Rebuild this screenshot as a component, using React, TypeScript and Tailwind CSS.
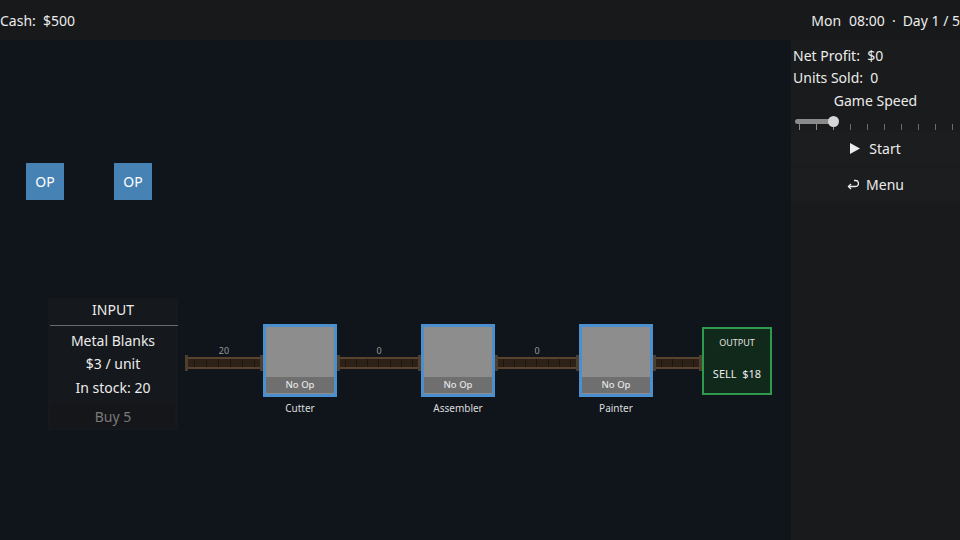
import { useState } from 'react'

const font = { fontFamily: '"Noto Sans", "Open Sans", sans-serif' }

function Conveyor({ width, count }: { width: number; count?: number }) {
  const ticks = Math.floor(width / 12)
  return (
    <div className="mt-[49px] flex flex-col items-center" style={{ width }}>
      <span className="h-[8px] text-[9px] leading-[8px] text-[#9a9a9a]">{count}</span>
      <div className="flex h-[16px] w-full items-center">
        <div className="h-[16px] w-[3px] bg-[#4d3e2e]" />
        <div className="flex h-[12px] flex-1 items-stretch justify-around border-y-2 border-[#57432f] bg-[#2e2117]">
          {Array.from({ length: ticks }).map((_, i) => (
            <div key={i} className="w-px bg-[#1c140d]" />
          ))}
        </div>
        <div className="h-[16px] w-[3px] bg-[#4d3e2e]" />
      </div>
    </div>
  )
}

function Machine({ name }: { name: string }) {
  return (
    <div className="mt-[26px] flex w-[74px] flex-col items-center">
      <div className="flex h-[73px] w-[74px] flex-col border-[3px] border-[#4b8fcf] bg-[#8d8d8d]">
        <div className="flex-1" />
        <div className="mb-[1px] flex h-[16px] items-center justify-center bg-[#6f6f6f] text-[9.5px] font-medium text-[#e4e4e4]">
          No Op
        </div>
      </div>
      <span className="mt-[4px] text-[10px] leading-[14px] text-[#dcdcdc]">{name}</span>
    </div>
  )
}

export default function App() {
  const [speed] = useState(2)

  return (
    <div className="flex h-[540px] w-[960px] flex-col overflow-hidden bg-[#10151c] text-[#ececec]" style={font}>
      <header className="flex h-10 shrink-0 items-center justify-between bg-[#18191b] text-[14px]">
        <span className="whitespace-pre">Cash:  $500</span>
        <div className="flex items-center whitespace-pre">
          <span>Mon</span>
          <span className="ml-[8px]">08:00</span>
          <span className="ml-[7px]">·</span>
          <span className="ml-[7px]">Day 1 / 5</span>
        </div>
      </header>

      <div className="flex flex-1">
        <main className="flex flex-1 flex-col">
          <div className="mt-[123px] flex gap-[50px] pl-[26px]">
            <button className="flex h-[37px] w-[38px] items-center justify-center bg-[#4682b4] text-[14px] text-white">OP</button>
            <button className="flex h-[37px] w-[38px] items-center justify-center bg-[#4682b4] text-[14px] text-white">OP</button>
          </div>

          <div className="mt-[98px] flex items-start pl-[48px]">
            <div className="flex h-[132px] w-[130px] flex-col items-center bg-[#15181c] text-[14px]">
              <span className="mt-[2px] leading-[20px]">INPUT</span>
              <div className="mt-[5px] h-px w-[128px] self-end bg-[#6a6a6a]" />
              <span className="mt-[5px] leading-[20px]">Metal Blanks</span>
              <span className="mt-[3px] leading-[20px]">$3 / unit</span>
              <span className="mt-[4px] leading-[20px]">In stock: 20</span>
              <button className="mt-[5px] flex h-[26px] w-[124px] items-center justify-center bg-[#141619] text-[#7a7a7a]">Buy 5</button>
            </div>

            <div className="ml-[7px] flex items-start">
              <Conveyor width={78} count={20} />
              <Machine name="Cutter" />
              <Conveyor width={84} count={0} />
              <Machine name="Assembler" />
              <Conveyor width={84} count={0} />
              <Machine name="Painter" />
              <Conveyor width={49} />
              <div className="mt-[29px] flex h-[68px] w-[70px] flex-col items-center border-2 border-[#2e9a4b] bg-[#10291a]">
                <span className="mt-[8px] text-[9px] leading-[12px] text-[#e0e0e0]">OUTPUT</span>
                <span className="mt-[18px] text-[11px] leading-[14px] text-[#ececec] whitespace-pre">SELL  $18</span>
              </div>
            </div>
          </div>
        </main>

        <aside className="flex w-[169px] flex-col bg-[#191a1b] text-[14px]">
          <div className="flex flex-col bg-[#1a1b1c] pb-[3px]">
            <span className="mt-[6px] pl-[2px] leading-[20px] whitespace-pre">Net Profit:  $0</span>
            <span className="mt-[2px] pl-[2px] leading-[20px] whitespace-pre">Units Sold:  0</span>
            <span className="mt-[3px] text-center leading-[20px]">Game Speed</span>
            <div className="relative mt-[3px] h-[18px] pl-[4px]">
              <div className="absolute left-[4px] top-[5px] h-[5px] w-[40px] rounded-full bg-[#8a8a8a]" />
              <div className="absolute left-[37px] top-[2px] h-[11px] w-[11px] rounded-full bg-[#d6d6d6]" />
              <div className="flex gap-[16px] pl-[4px] pt-[10px]">
                {Array.from({ length: 10 }).map((_, i) => (
                  <div key={i} className={`h-[6px] w-px ${i < speed + 1 ? 'bg-[#8a8a8a]' : 'bg-[#6c6c6c]'}`} />
                ))}
              </div>
            </div>
            <button className="flex h-[32px] items-center justify-center gap-[9px] bg-[#1c1d1e]">
              <svg width="10" height="11" viewBox="0 0 10 11">
                <path d="M0 0 L10 5.5 L0 11 Z" fill="#ececec" />
              </svg>
              <span>Start</span>
            </button>
            <button className="mt-[4px] flex h-[32px] items-center justify-center gap-[7px] bg-[#1c1d1e]">
              <svg width="12" height="11" viewBox="0 0 12 11" fill="none" stroke="#ececec" strokeWidth="1.3">
                <path d="M7 1.5 H8.5 A3 3 0 0 1 8.5 7.5 H1.5" />
                <path d="M4 5 L1.5 7.5 L4 10" />
              </svg>
              <span>Menu</span>
            </button>
          </div>
        </aside>
      </div>
    </div>
  )
}
